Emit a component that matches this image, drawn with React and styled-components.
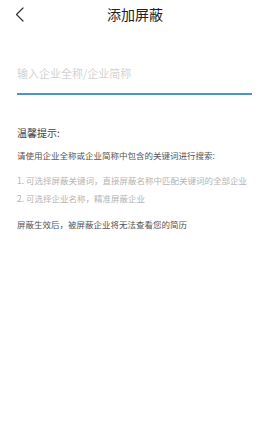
import React from "react";
import styled, { createGlobalStyle } from "styled-components";

const Global = createGlobalStyle`
  html, body { margin: 0; padding: 0; background: #fff; }
  body { font-family: "Noto Sans CJK SC", "Noto Sans", sans-serif; }
  * { box-sizing: border-box; }
`;

const Page = styled.div`
  width: 270px;
  min-height: 427px;
  background: #fff;
`;

const Header = styled.header`
  height: 28px;
  display: grid;
  grid-template-columns: 1fr auto 1fr;
  align-items: center;
`;

const Back = styled.button`
  justify-self: start;
  margin-left: 12px;
  padding: 0;
  border: 0;
  background: none;
  width: 14px;
  height: 16px;
  display: flex;
  align-items: center;
  justify-content: center;
`;

const Title = styled.h1`
  margin: 0;
  font-size: 14px;
  font-weight: 400;
  color: #222;
  line-height: 20px;
`;

const Main = styled.main`
  padding: 0 18px 0 17px;
`;

const SearchField = styled.div`
  margin-top: 34px;
  padding-bottom: 9px;
  border-bottom: 2px solid #4a94d4;
`;

const Input = styled.input`
  display: block;
  width: 100%;
  height: 22px;
  border: 0;
  outline: none;
  padding: 0;
  font-family: inherit;
  font-size: 11px;
  color: #333;
  background: transparent;
  &::placeholder { color: #d2d2d2; }
`;

const TipsTitle = styled.h2`
  margin: 31px 0 0;
  font-size: 10px;
  line-height: 14px;
  font-weight: 400;
  color: #444;
`;

const TipText = styled.p`
  margin: ${(p) => p.$gap}px 0 0;
  font-size: 8.5px;
  line-height: 12px;
  color: ${(p) => (p.$muted ? "#b4b4b4" : "#555")};
  white-space: nowrap;
`;

export default function App() {
  return (
    <>
      <Global />
      <Page>
        <Header>
          <Back aria-label="返回">
            <svg width="9" height="15" viewBox="0 0 9 15" fill="none">
              <path d="M8 1 L1.5 7.5 L8 14" stroke="#333" strokeWidth="1.2" strokeLinecap="round" strokeLinejoin="round" />
            </svg>
          </Back>
          <Title>添加屏蔽</Title>
          <span />
        </Header>
        <Main>
          <SearchField>
            <Input placeholder="输入企业全称/企业简称" />
          </SearchField>
          <TipsTitle>温馨提示:</TipsTitle>
          <TipText $gap={9}>请使用企业全称或企业简称中包含的关键词进行搜索:</TipText>
          <TipText $gap={13} $muted>1. 可选择屏蔽关键词，直接屏蔽名称中匹配关键词的全部企业</TipText>
          <TipText $gap={6} $muted>2. 可选择企业名称，精准屏蔽企业</TipText>
          <TipText $gap={13.5}>屏蔽生效后，被屏蔽企业将无法查看您的简历</TipText>
        </Main>
      </Page>
    </>
  );
}
